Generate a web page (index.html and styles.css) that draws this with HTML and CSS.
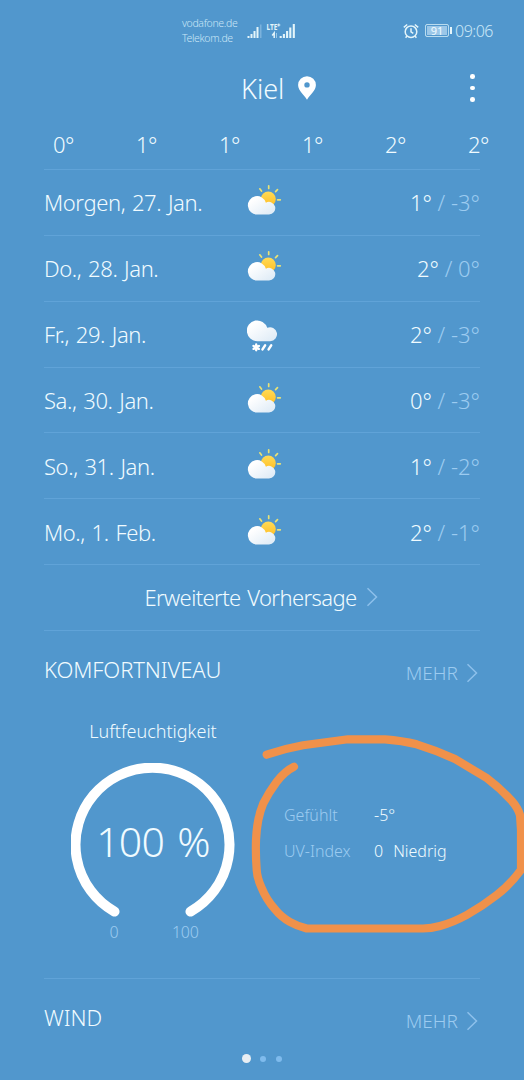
FILE: index.html
```
<!DOCTYPE html>
<html lang="de">
<head>
    <meta charset="UTF-8">
    <meta name="viewport" content="width=device-width, initial-scale=1.0">
    <title>Wetter Kiel</title>
    <link rel="stylesheet" href="styles.css">
</head>
<body>
    <!-- Icons -->
    <svg class="defs" width="0" height="0">
        <defs>
            <linearGradient id="cloudFill" x1="0" y1="0" x2="1" y2="1">
                <stop offset="0.2" stop-color="#ffffff"/>
                <stop offset="1" stop-color="#dbe9f5"/>
            </linearGradient>
            <linearGradient id="sunFill" x1="0" y1="0" x2="0" y2="1">
                <stop offset="0" stop-color="#ffdb57"/>
                <stop offset="1" stop-color="#ffbd22"/>
            </linearGradient>
        </defs>
        <symbol id="sunny" viewBox="0 0 36 36">
            <path d="M21.700 1.800v2.700M12.800 4.800l1.700 2.200M30.500 5.700l-1.900 2M30.600 15.800h2.700" stroke="#e9e276" stroke-width="1.700" stroke-linecap="round" fill="none"/>
            <circle cx="21.300" cy="15" r="7.500" fill="url(#sunFill)"/>
            <path d="M10.300 30.500a9.200 9.200 0 1 1 8.600-11.800 6.300 6.300 0 1 1 3.100 11.800z" fill="url(#cloudFill)"/>
        </symbol>
        <symbol id="sleet" viewBox="0 0 36 36">
            <path d="M10.300 25.200a10.400 10.400 0 1 1 9.900-13.400 7 7 0 1 1 3 13.400z" fill="url(#cloudFill)"/>
            <path d="M9.200 28.500v5.800M6.500 29.900l5.400 3M11.900 29.900l-5.400 3" stroke="#fff" stroke-width="2.300" stroke-linecap="round" fill="none"/>
            <path d="M18.100 29.300l-2.600 4.100M24.200 29.300l-2.600 4.100" stroke="#fff" stroke-width="2.500" stroke-linecap="round" fill="none"/>
        </symbol>
        <symbol id="chevron" viewBox="0 0 12 20">
            <path d="M1.500 1.300l9 8.700-9 8.700" stroke="#8dc0eb" stroke-width="1.500" fill="none"/>
        </symbol>
    </svg>

    <div class="status">
        <div class="carriers">
            <span>vodafone.de</span>
            <span>Telekom.de</span>
        </div>
        <svg class="signal" width="50" height="24" viewBox="0 -3 50 24">
            <path d="M1.500 16v-2M4.500 16v-4M7.500 16V9M10.500 16V5" stroke="#e4f5fa" stroke-width="2"/>
            <path d="M13.700 16V2.500" stroke="#7cb2dc" stroke-width="1.600"/>
            <text class="lte" x="19.500" y="8" textLength="11" lengthAdjust="spacingAndGlyphs">LTE</text>
            <path d="M31.800 1.500v3M30.300 3h3" stroke="#e4f5fa" stroke-width="1"/>
            <path d="M27.200 16v-5l-2 2.500" stroke="#e4f5fa" stroke-width="1.500" fill="none"/>
            <path d="M29.500 11v5" stroke="#9cc8e6" stroke-width="1"/>
            <path d="M33.700 16v-2M36.900 16v-4M40.100 16V9M43.300 16V5.500M46.800 16V2" stroke="#e4f5fa" stroke-width="2.100"/>
        </svg>
        <div class="status-right">
            <svg width="16" height="16" viewBox="0 0 16 16" fill="none" stroke="#e4f5fa" stroke-width="1.500">
                <circle cx="8" cy="8.700" r="5.800"/>
                <path d="M8 5.200v3.700l2.300 1.500M.8 4.300L4.200 1.500M11.800 1.500l3.400 2.800M4 13l-1.400 1.700M12 13l1.400 1.700"/>
            </svg>
            <div class="battery">91</div>
            <span class="time">09:06</span>
        </div>
    </div>

    <header class="header">
        <h1>Kiel</h1>
        <svg class="pin" width="18" height="24" viewBox="0 0 18 24">
            <path d="M9 .2a8.900 8.900 0 0 0-8.900 8.900C.1 15 5.800 18.500 9 23.700c3.200-5.200 8.900-8.700 8.900-14.600A8.900 8.900 0 0 0 9 .2zm0 6a2.700 2.700 0 1 1 0 5.400 2.700 2.700 0 0 1 0-5.400z" fill="#fff"/>
        </svg>
        <div class="menu"><i></i><i></i><i></i></div>
    </header>

    <div class="hours">
        <span>0°</span><span>1°</span><span>1°</span><span>1°</span><span>2°</span><span>2°</span>
    </div>

    <main class="content">
        <div class="day">
            <span class="date">Morgen, 27. Jan.</span>
            <svg class="icon"><use href="#sunny"/></svg>
            <span class="temp">1° <span class="low">/ -3°</span></span>
        </div>
        <div class="day">
            <span class="date">Do., 28. Jan.</span>
            <svg class="icon"><use href="#sunny"/></svg>
            <span class="temp">2° <span class="low">/ 0°</span></span>
        </div>
        <div class="day">
            <span class="date">Fr., 29. Jan.</span>
            <svg class="icon"><use href="#sleet"/></svg>
            <span class="temp">2° <span class="low">/ -3°</span></span>
        </div>
        <div class="day">
            <span class="date">Sa., 30. Jan.</span>
            <svg class="icon"><use href="#sunny"/></svg>
            <span class="temp">0° <span class="low">/ -3°</span></span>
        </div>
        <div class="day">
            <span class="date">So., 31. Jan.</span>
            <svg class="icon"><use href="#sunny"/></svg>
            <span class="temp">1° <span class="low">/ -2°</span></span>
        </div>
        <div class="day">
            <span class="date">Mo., 1. Feb.</span>
            <svg class="icon"><use href="#sunny"/></svg>
            <span class="temp">2° <span class="low">/ -1°</span></span>
        </div>
        <a class="forecast">
            <span>Erweiterte Vorhersage</span>
            <svg class="chevron"><use href="#chevron"/></svg>
        </a>

        <section class="comfort">
            <div class="title">
                <h2>KOMFORTNIVEAU</h2>
                <a class="more"><span>MEHR</span><svg class="chevron"><use href="#chevron"/></svg></a>
            </div>
            <div class="comfort-body">
                <div class="humidity">
                    <h3>Luftfeuchtigkeit</h3>
                    <div class="gauge">
                        <svg width="164" height="156" viewBox="0 0 164 156">
                            <path d="M43.500 148.600A77 77 0 1 1 119.500 148.600" stroke="#fff" stroke-width="10" stroke-linecap="round" fill="none"/>
                        </svg>
                        <span class="percent">100 %</span>
                    </div>
                    <div class="scale"><span>0</span><span>100</span></div>
                </div>
                <dl class="values">
                    <dt>Gefühlt</dt><dd>-5°</dd>
                    <dt>UV-Index</dt><dd><span class="uv">0</span>Niedrig</dd>
                </dl>
            </div>
        </section>

        <section class="wind">
            <div class="title">
                <h2>WIND</h2>
                <a class="more"><span>MEHR</span><svg class="chevron"><use href="#chevron"/></svg></a>
            </div>
        </section>
    </main>

    <div class="dots"><i class="on"></i><i></i><i></i></div>

    <!-- Hand-drawn marking over the values -->
    <svg class="marker" width="274" height="204" viewBox="250 732 274 204">
        <path d="M266.700 754.700Q285 748.500 303 745.300L348 739.300H385Q402 740.500 416.700 744.300Q437 750.500 455 759L470 768L486.700 778Q500 788 511.700 800.700Q518 808 520 815L521 830V870Q510 885 496.700 895Q482 906.500 466.700 915Q453 922.500 440 926Q431 928.500 423 928.500H306.700Q297 926 290 922Q281 917 275 909.300Q266 899 261.700 888Q257 878 256.700 870Q255.500 855 256 840Q257 818 263.300 803.300Q269 792 276.700 781.700Q285 771 294 766.700"/>
    </svg>
</body>
</html>
```
FILE: styles.css
```
* {
    box-sizing: border-box;
}
body {
    margin: 0;
    width: 524px;
    height: 1080px;
    position: relative;
    overflow: hidden;
    background: #5197cd;
    color: #f0fbff;
    font-family: "Noto Sans", "Open Sans", sans-serif;
    font-weight: 300;
    font-size: 22px;
}
h1, h2, h3, dl, dd {
    margin: 0;
    font-weight: 300;
}
.defs {
    position: absolute;
}

/* Status bar */
.status {
    display: flex;
    align-items: center;
    height: 60px;
    padding: 1px 31px 0 182px;
    color: #c9e6f6;
}
.carriers {
    display: flex;
    flex-direction: column;
    width: 65px;
    font-size: 10.5px;
    line-height: 14.5px;
    letter-spacing: -0.35px;
}
.signal {
    overflow: visible;
}
.lte {
    font-size: 9px;
    font-weight: 700;
    fill: #e4f5fa;
}
.status-right {
    display: flex;
    align-items: center;
    margin-left: auto;
}
.battery {
    width: 24px;
    height: 13px;
    margin: 0 6px 0 6px;
    border: 1px solid #b9dcef;
    border-radius: 2px;
    background: #9bc7e8;
    box-shadow: inset 0 0 0 1px #5197cd;
    color: #f0fbff;
    font-size: 11px;
    font-weight: 400;
    line-height: 11px;
    text-align: center;
    position: relative;
}
.battery::after {
    content: "";
    position: absolute;
    right: -4px;
    top: 2px;
    width: 2px;
    height: 7px;
    background: #e4f5fa;
}
.time {
    font-size: 16px;
    letter-spacing: -0.5px;
}

/* Header */
.header {
    display: flex;
    align-items: center;
    height: 58px;
    padding: 0 49px 2px 241px;
}
.header h1 {
    width: 57px;
    font-size: 27px;
}
.menu {
    display: flex;
    flex-direction: column;
    gap: 7px;
    margin-left: auto;
}
.menu i {
    width: 4.6px;
    height: 4.6px;
    border-radius: 50%;
    background: #fff;
}

.hours {
    display: grid;
    grid-template-columns: repeat(6, 83px);
    height: 51px;
    padding-left: 22px;
    line-height: 53px;
    letter-spacing: -0.5px;
    text-align: center;
}

/* Forecast */
.content {
    padding: 0 44px;
}
.day, .forecast, .comfort, .wind {
    border-top: 1px solid #60a3d8;
}
.day {
    display: grid;
    grid-template-columns: 203px 1fr auto;
    align-items: center;
    height: 65.85px;
}
.date {
    letter-spacing: -0.4px;
    word-spacing: 1.4px;
}
.icon {
    width: 36px;
    height: 36px;
    display: block;
}
.low {
    color: #9ccbf0;
}
.forecast {
    display: flex;
    align-items: center;
    justify-content: center;
    gap: 9px;
    height: 66px;
    padding: 0 2px 2px 0;
    letter-spacing: -0.6px;
    word-spacing: 1.5px;
}
.chevron {
    width: 12px;
    height: 20px;
}

.title {
    display: flex;
    justify-content: space-between;
    height: 77px;
    line-height: 76px;
}
.title h2 {
    font-size: 22px;
    letter-spacing: -0.1px;
}
.more {
    display: flex;
    align-items: center;
    gap: 8px;
    padding: 6px 2px 0 0;
    color: #9ccbf0;
    font-size: 19px;
}

/* Comfort */
.comfort {
    height: 348px;
}
.comfort-body {
    display: flex;
}
.humidity {
    display: flex;
    flex-direction: column;
    align-items: center;
    width: 218px;
}
.humidity h3 {
    font-size: 18px;
    line-height: 46px;
    margin-bottom: 9px;
}
.gauge {
    display: grid;
    place-items: center;
}
.gauge > * {
    grid-area: 1 / 1;
}
.percent {
    font-size: 41px;
    letter-spacing: -0.8px;
    word-spacing: 3.5px;
}
.scale {
    display: flex;
    justify-content: space-between;
    width: 89px;
    margin: 2px 0 0 2px;
    color: #9ccbf0;
    font-size: 16px;
    letter-spacing: -0.3px;
}
.values {
    display: grid;
    grid-template-columns: 90px auto;
    align-content: start;
    padding: 89px 0 0 22px;
    font-size: 16px;
    line-height: 36px;
}
.values dt {
    color: #9ccbf0;
}
.uv {
    margin-right: 10px;
}

/* Page dots */
.dots {
    display: flex;
    align-items: center;
    gap: 10.5px;
    margin-top: -2px;
    padding-left: 242px;
}
.dots i {
    width: 6px;
    height: 6px;
    border-radius: 50%;
    background: #7fbbed;
}
.dots i:nth-child(2) {
    margin-left: -2px;
}
.dots .on {
    width: 9px;
    height: 9px;
    background: #e8eef3;
}

.marker {
    position: absolute;
    left: 250px;
    top: 732px;
}
.marker path {
    fill: none;
    stroke: #f0914a;
    stroke-width: 8.2;
    stroke-linecap: round;
    stroke-linejoin: round;
}
```
